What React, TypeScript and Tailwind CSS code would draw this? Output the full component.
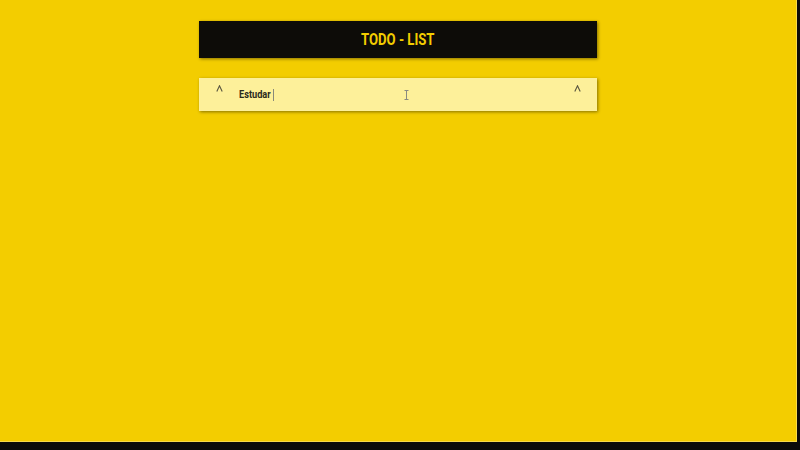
function Caret({ className }: { className: string }) {
  return (
    <svg className={className} width="7" height="7" viewBox="0 0 7 7">
      <path d="M0.8 6.5L3.5 0.8L6.2 6.5" stroke="#5a5640" strokeWidth="1.1" fill="none" />
    </svg>
  );
}

export default function App() {
  return (
    <div className="w-[800px] h-[450px] bg-[#0b0d0a] overflow-hidden" style={{ fontFamily: "Roboto, 'Liberation Sans', sans-serif" }}>
      <div className="w-[797px] h-[442px] bg-[#f3cd00] border-r border-b border-[#f7dc4a] flex flex-col items-center pt-[21px]">
        <div className="w-[398px] h-[37px] bg-[#0d0c08] flex items-center justify-center shadow-[1px_1px_3px_rgba(0,0,0,0.45)]">
          <h1 className="text-[16px] font-bold text-[#f3cd00] inline-block scale-x-[0.82] leading-none">TODO - LIST</h1>
        </div>
        <div className="mt-[20px] w-[398px] h-[33px] bg-[#fdf09a] shadow-[1px_1px_3px_rgba(0,0,0,0.45)] relative">
          <Caret className="absolute left-[17px] top-[7px]" />
          <div className="absolute left-[40px] top-[10px] flex items-center">
            <span className="text-[11.5px] font-bold text-[#2a2a1a] leading-[13px] inline-block scale-x-[0.8] origin-left">Estudar</span>
            <span className="ml-[-6px] w-px h-[12px] bg-[#8a8a7a]" />
          </div>
          <svg className="absolute left-[205px] top-[12px]" width="5" height="10" viewBox="0 0 5 10">
            <path d="M0.5 0.5H4.5M2.5 0.5V9.5M0.5 9.5H4.5" stroke="#8a8a80" strokeWidth="1" fill="none" />
          </svg>
          <Caret className="absolute right-[16px] top-[7px]" />
        </div>
      </div>
    </div>
  );
}
